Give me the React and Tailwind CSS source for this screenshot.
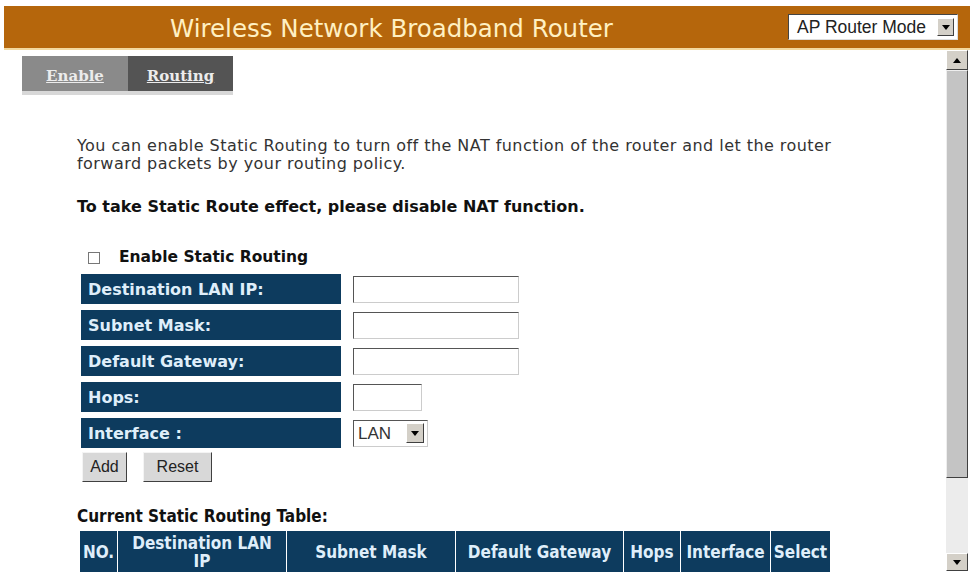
export default function App() {
  const rows = [
    { label: 'Destination LAN IP:', kind: 'text' },
    { label: 'Subnet Mask:', kind: 'text' },
    { label: 'Default Gateway:', kind: 'text' },
    { label: 'Hops:', kind: 'short' },
    { label: 'Interface :', kind: 'select' },
  ]

  const cols = [
    { name: 'NO.', w: 'w-[37px]' },
    { name: 'Destination LAN IP', w: 'w-[168px]' },
    { name: 'Subnet Mask', w: 'w-[168px]' },
    { name: 'Default Gateway', w: 'w-[167px]' },
    { name: 'Hops', w: 'w-[56px]' },
    { name: 'Interface', w: 'w-[89px]' },
    { name: 'Select', w: 'w-[59px]' },
  ]

  return (
    <div className="w-[976px] h-[573px] bg-white overflow-hidden font-['DejaVu_Sans',sans-serif] text-[#222]">
      {/* Bandeau titre */}
      <div className="pt-[6px] pl-[4px] pr-[6px]">
        <div className="h-[44px] bg-[#b5660c] border-b-2 border-[#f3d9a0] flex items-center">
          <div className="pl-[166px] pt-[4px] w-[784px] text-[24.5px] text-[#fff0c2] whitespace-nowrap">
            Wireless Network Broadband Router
          </div>
          <div className="w-[170px] h-[26px] bg-white border border-[#444] border-r-[#ddd] border-b-[#ddd] flex items-center">
            <span className="flex-1 pl-[8px] text-[17.5px] text-[#222] font-['Liberation_Sans',sans-serif] whitespace-nowrap">AP Router Mode</span>
            <span className="w-[17px] h-[18px] mr-[3px] bg-[#d4d0c8] border border-[#fff] border-r-[#404040] border-b-[#404040] flex items-center justify-center">
              <svg width="8" height="5" viewBox="0 0 8 5"><path d="M0 0h8L4 5z" fill="#000" /></svg>
            </span>
          </div>
        </div>
      </div>

      <div className="flex">
        {/* Contenu */}
        <div className="w-[946px] h-[523px]">
          {/* Onglets */}
          <div className="pt-[6px] pl-[22px] flex">
            <div className="w-[106px] h-[35px] pt-[6px] bg-[#8a8a8a] shadow-[0_4px_0_#d8d8d8] flex items-center justify-center">
              <span className="text-[15px] font-bold underline text-[#ececec] font-['DejaVu_Serif',serif]">Enable</span>
            </div>
            <div className="w-[105px] h-[35px] pt-[6px] bg-[#545454] shadow-[0_4px_0_#d8d8d8] flex items-center justify-center">
              <span className="text-[15px] font-bold underline text-[#ececec] font-['DejaVu_Serif',serif]">Routing</span>
            </div>
          </div>

          <div className="pl-[77px]">
            <p className="mt-[46px] text-[16px] leading-[18px] tracking-[0.45px] text-[#333] whitespace-nowrap">
              You can enable Static Routing to turn off the NAT function of the router and let the router
              <br />
              forward packets by your routing policy.
            </p>
            <p className="mt-[22px] text-[16px] font-bold text-[#111] whitespace-nowrap">
              To take Static Route effect, please disable NAT function.
            </p>

            <div className="mt-[27px] pl-[11px] flex items-center gap-[19px]">
              <span className="w-[12px] h-[12px] border border-[#777] bg-white"></span>
              <span className="text-[15.5px] font-bold text-[#111]">Enable Static Routing</span>
            </div>

            <div className="mt-[5px] pl-[4px] flex flex-col gap-[6px]">
              {rows.map((r) => (
                <div key={r.label} className="flex items-center">
                  <div className="w-[260px] h-[30px] bg-[#0d3b5e] flex items-center pl-[7px] pt-[2px] text-[16px] font-bold text-[#dfeefa] whitespace-nowrap">
                    {r.label}
                  </div>
                  <div className="pl-[12px]">
                    {r.kind === 'text' && (
                      <div className="w-[166px] h-[27px] bg-white border border-[#555] border-r-[#ccc] border-b-[#ccc]"></div>
                    )}
                    {r.kind === 'short' && (
                      <div className="w-[69px] h-[27px] bg-white border border-[#555] border-r-[#ccc] border-b-[#ccc]"></div>
                    )}
                    {r.kind === 'select' && (
                      <div className="w-[75px] h-[27px] bg-white border border-[#555] border-r-[#ccc] border-b-[#ccc] flex items-center">
                        <span className="flex-1 pl-[4px] text-[17px] text-[#333] font-['Liberation_Sans',sans-serif]">LAN</span>
                        <span className="w-[18px] h-[20px] mr-[3px] bg-[#d4d0c8] border border-[#fff] border-r-[#404040] border-b-[#404040] flex items-center justify-center">
                          <svg width="8" height="5" viewBox="0 0 8 5"><path d="M0 0h8L4 5z" fill="#000" /></svg>
                        </span>
                      </div>
                    )}
                  </div>
                </div>
              ))}
            </div>

            <div className="mt-[4px] pl-[5px] flex gap-[16px]">
              <button className="w-[45px] h-[30px] bg-[#d8d8d8] border border-[#f4f4f4] border-r-[#404040] border-b-[#404040] text-[16px] text-[#222] font-['Liberation_Sans',sans-serif]">
                Add
              </button>
              <button className="w-[69px] h-[30px] bg-[#d8d8d8] border border-[#f4f4f4] border-r-[#404040] border-b-[#404040] text-[16px] text-[#222] font-['Liberation_Sans',sans-serif]">
                Reset
              </button>
            </div>

            <p className="mt-[25px] text-[17px] font-bold text-[#111] font-['DejaVu_Sans_Condensed','DejaVu_Sans',sans-serif] leading-[18px] whitespace-nowrap">
              Current Static Routing Table:
            </p>

            <div className="mt-[6px] pl-[3px] flex gap-[1px]">
              {cols.map((c) => (
                <div
                  key={c.name}
                  className={`${c.w} h-[41px] bg-[#0d3b5e] flex items-center justify-center text-center text-[17px] leading-[18px] font-bold text-[#dfeefa] font-['DejaVu_Sans_Condensed','DejaVu_Sans',sans-serif] whitespace-nowrap`}
                >
                  {c.name === 'Destination LAN IP' ? (
                    <span>
                      Destination LAN
                      <br />
                      IP
                    </span>
                  ) : (
                    c.name
                  )}
                </div>
              ))}
            </div>
          </div>
        </div>

        {/* Barre de defilement */}
        <div className="w-[22px] h-[521px] flex flex-col bg-[#e6e6e6]">
          <div className="h-[20px] bg-[#d4d0c8] border border-[#fff] border-r-[#404040] border-b-[#404040] flex items-center justify-center">
            <svg width="8" height="5" viewBox="0 0 8 5"><path d="M0 5h8L4 0z" fill="#000" /></svg>
          </div>
          <div className="h-[408px] bg-[#c4c4c4] border border-[#eee] border-r-[#404040] border-b-[#404040]"></div>
          <div className="flex-1 bg-[#ececec]"></div>
          <div className="h-[18px] bg-[#d4d0c8] border border-[#fff] border-r-[#404040] border-b-[#404040] flex items-center justify-center">
            <svg width="8" height="5" viewBox="0 0 8 5"><path d="M0 0h8L4 5z" fill="#000" /></svg>
          </div>
        </div>
      </div>
    </div>
  )
}
